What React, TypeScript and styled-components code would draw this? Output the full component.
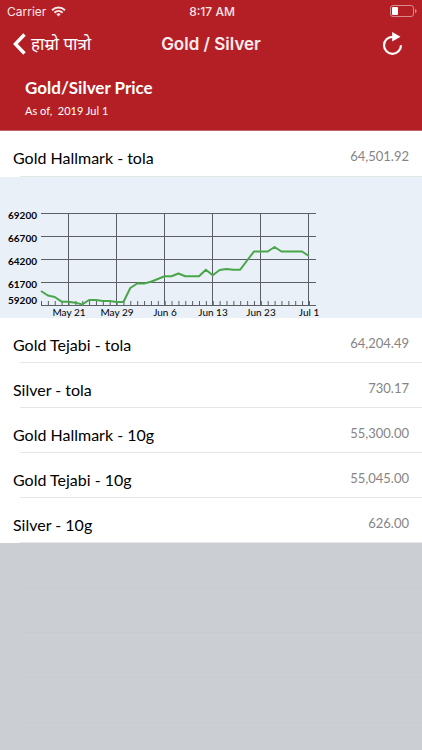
import React from "react";
import styled, { createGlobalStyle } from "styled-components";

const Global = createGlobalStyle`
  *, *::before, *::after { box-sizing: border-box; }
  html, body { margin: 0; background: #cbcfd3; }
  body { font-family: Lato, "Noto Sans", sans-serif; color: #111; }
`;

const Screen = styled.div`
  min-height: 100vh;
  display: flex;
  flex-direction: column;
`;

const Header = styled.header`
  background: #b41f26;
  color: #fff;
  border-bottom: 1px solid #c2666c;
`;

const StatusBar = styled.div`
  display: grid;
  grid-template-columns: 1fr auto 1fr;
  align-items: center;
  height: 22px;
  padding: 0 5px 0 7px;
  font-family: Inter, sans-serif;
  font-size: 12px;
  color: #fbe6e7;
`;

const Carrier = styled.div`
  display: flex;
  align-items: center;
  gap: 5px;
`;

const Clock = styled.div`
  font-weight: 500;
`;

const Battery = styled.svg`
  justify-self: end;
`;

const NavBar = styled.nav`
  display: grid;
  grid-template-columns: 1fr auto 1fr;
  align-items: center;
  height: 44px;
  padding: 0 13px;
`;

const IconButton = styled.button<{ $end?: boolean }>`
  display: flex;
  align-items: center;
  gap: 5px;
  justify-self: ${(p) => (p.$end ? "end" : "start")};
  padding: ${(p) => (p.$end ? "0 6px" : "0")};
  border: 0;
  background: none;
  color: #fff;
  font-family: "Noto Sans", "Noto Sans Devanagari", sans-serif;
  font-size: 17px;
  line-height: 24px;
  white-space: nowrap;
`;

const NavTitle = styled.h1`
  margin: 0;
  font-family: Inter, sans-serif;
  font-size: 17px;
  font-weight: 600;
  color: #fdeced;
`;

const Summary = styled.div`
  padding: 10px 25px 11px;
`;

const SummaryTitle = styled.h2`
  margin: 0;
  font-size: 17px;
  line-height: 24px;
  font-weight: 700;
`;

const SummaryDate = styled.p`
  margin: 2px 0 0;
  font-size: 11px;
  line-height: 17px;
  white-space: pre;
`;

const List = styled.ul`
  margin: 0;
  padding: 0;
  list-style: none;
`;

const Item = styled.li`
  background: #fff;
`;

const Row = styled.div<{ $open?: boolean }>`
  display: flex;
  justify-content: space-between;
  align-items: flex-start;
  height: ${(p) => (p.$open ? 46 : 45)}px;
  padding: 0 13px;
  background: linear-gradient(#e5e6e7, #e5e6e7) 20px 100% / 100% 1px no-repeat;
`;

const Name = styled.span`
  padding-top: 15px;
  font-size: 16px;
  line-height: 24px;
  color: #000;
`;

const Price = styled.span`
  padding-top: 15px;
  font-size: 13px;
  line-height: 20px;
  color: #858585;
`;

const ChartPanel = styled.div`
  background: #e9f0f7;
  height: 141px;
  overflow: hidden;
`;

const ChartSvg = styled.svg`
  display: block;
`;

const YLabel = styled.text`
  font-size: 10px;
  font-weight: 700;
  text-anchor: end;
`;

const XLabel = styled.text`
  font-size: 10px;
  text-anchor: middle;
`;

const Filler = styled.div`
  flex: 1;
  background: repeating-linear-gradient(transparent 0 44px, #c8cbd0 44px 45px) 20px 0 no-repeat;
`;

const history = [
  78, 82.5, 84, 88.7, 88.7, 89.7, 91.4, 87, 87, 88, 88, 89, 89, 75, 70.5, 70.5, 68.8, 66,
  63.3, 63.3, 60.5, 63.3, 63.3, 63.3, 56.7, 62.3, 57, 56, 56.7, 56.7, 47.5, 38.5, 38.5,
  38.5, 34, 38.5, 38.5, 38.5, 38.5, 43,
];
const yLabels = ["69200", "66700", "64200", "61700", "59200"];
const xLabels = ["May 21", "May 29", "Jun 6", "Jun 13", "Jun 23", "Jul 1"];
const left = 41;
const top = 36;
const step = 6.87;

function PriceChart() {
  return (
    <ChartSvg width="330" height="141" viewBox="0 0 330 141" role="img" aria-label="Gold Hallmark price history">
      <g stroke="#5b5f63" strokeWidth="1">
        {yLabels.map((label, i) => (
          <line key={label} x1={left} x2="316" y1={top + i * 23 + 0.5} y2={top + i * 23 + 0.5} />
        ))}
        {xLabels.map((label, i) => (
          <line key={label} x1={68.5 + i * 48} x2={68.5 + i * 48} y1={top} y2={top + 92} />
        ))}
        {history.map((_, i) => (
          <line key={i} x1={left + i * step + 0.5} x2={left + i * step + 0.5} y1={top + 88} y2={top + 92} />
        ))}
      </g>
      <polyline
        points={history.map((v, i) => `${left + i * step},${top + v}`).join(" ")}
        fill="none"
        stroke="#4aa64b"
        strokeWidth="2"
        strokeLinejoin="round"
      />
      {yLabels.map((label, i) => (
        <YLabel key={label} x="37" y={i === 4 ? 127 : 42 + i * 23}>{label}</YLabel>
      ))}
      {xLabels.map((label, i) => (
        <XLabel key={label} x={69 + i * 48} y="139">{label}</XLabel>
      ))}
    </ChartSvg>
  );
}

const prices = [
  { name: "Gold Hallmark - tola", price: "64,501.92", open: true },
  { name: "Gold Tejabi - tola", price: "64,204.49" },
  { name: "Silver - tola", price: "730.17" },
  { name: "Gold Hallmark - 10g", price: "55,300.00" },
  { name: "Gold Tejabi - 10g", price: "55,045.00" },
  { name: "Silver - 10g", price: "626.00" },
];

export default function App() {
  return (
    <Screen>
      <Global />
      <Header>
        <StatusBar>
          <Carrier>
            Carrier
            <svg width="15" height="11" viewBox="0 0 15 11" fill="none" stroke="currentColor" strokeWidth="2">
              <path d="M1 4.200C4.800.500 10.200.500 14 4.200" />
              <path d="M3.400 6.700c2.400-2.300 5.800-2.300 8.200 0" />
              <path d="M5.400 8.300a3.100 3.100 0 0 1 4.200 0L7.500 10.600z" fill="currentColor" stroke="none" />
            </svg>
          </Carrier>
          <Clock>8:17 AM</Clock>
          <Battery width="27" height="12" viewBox="0 0 27 12" fill="none">
            <rect x=".5" y=".5" width="23" height="11" rx="2.500" stroke="#d98a8e" />
            <rect x="2" y="2" width="6" height="8" rx="1" fill="#fff" />
            <path d="M25 4v4c1-.3 1.600-1 1.600-2S26 4.300 25 4z" fill="#d98a8e" />
          </Battery>
        </StatusBar>
        <NavBar>
          <IconButton type="button">
            <svg width="13" height="22" viewBox="0 0 13 22" fill="none" stroke="currentColor" strokeWidth="3.400">
              <path d="M11.500 1.500 2.400 11l9.100 9.500" />
            </svg>
            हाम्रो पात्रो
          </IconButton>
          <NavTitle>Gold / Silver</NavTitle>
          <IconButton type="button" $end aria-label="Refresh">
            <svg width="21" height="24" viewBox="0 0 21 24" fill="none">
              <path d="M19 13.300A8.500 8.500 0 1 1 10.500 4.800h1.500" stroke="currentColor" strokeWidth="2.200" />
              <path d="M10.200 0 18.500 4.800l-8.300 4.800z" fill="currentColor" />
            </svg>
          </IconButton>
        </NavBar>
        <Summary>
          <SummaryTitle>Gold/Silver Price</SummaryTitle>
          <SummaryDate>As of,  2019 Jul 1</SummaryDate>
        </Summary>
      </Header>
      <List>
        {prices.map((p) => (
          <Item key={p.name}>
            <Row $open={p.open}>
              <Name>{p.name}</Name>
              <Price>{p.price}</Price>
            </Row>
            {p.open && (
              <ChartPanel>
                <PriceChart />
              </ChartPanel>
            )}
          </Item>
        ))}
      </List>
      <Filler />
    </Screen>
  );
}
